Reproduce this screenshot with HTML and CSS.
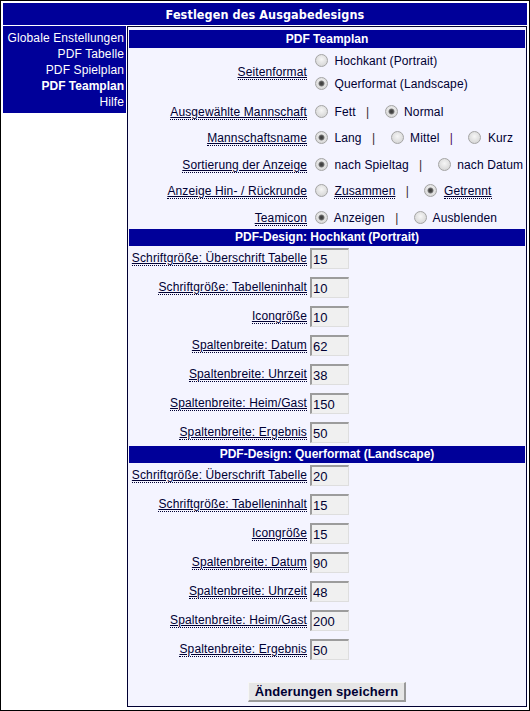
FILE: index.html
```html
<!DOCTYPE html>
<html lang="de">
<head>
<meta charset="utf-8">
<title>Festlegen des Ausgabedesigns</title>
<link rel="stylesheet" href="styles.css">
</head>
<body>
<div class="page">
  <div class="title">Festlegen des Ausgabedesigns</div>
  <div class="main">
    <nav class="side">
      <a href="#">Globale Enstellungen</a>
      <a href="#">PDF Tabelle</a>
      <a href="#">PDF Spielplan</a>
      <a href="#" class="active">PDF Teamplan</a>
      <a href="#">Hilfe</a>
    </nav>
    <form class="panel">
      <div class="band first">PDF Teamplan</div>
      <div class="grid radios">
        <div class="lbl r1"><span class="tip">Seitenformat</span></div>
        <div class="val r1">
          <div class="line"><input type="radio" name="sf"> Hochkant (Portrait)</div>
          <div class="line"><input type="radio" name="sf" checked> Querformat (Landscape)</div>
        </div>

        <div class="lbl"><span class="tip">Ausgewählte Mannschaft</span></div>
        <div class="val"><div class="line"><input type="radio" name="am"> Fett &nbsp; <span class="sep">|</span> &nbsp; <input type="radio" name="am" checked> Normal</div></div>

        <div class="lbl"><span class="tip">Mannschaftsname</span></div>
        <div class="val"><div class="line"><input type="radio" name="mn" checked> Lang &nbsp; <span class="sep">|</span> &nbsp; <input type="radio" name="mn"> Mittel &nbsp; <span class="sep alt">|</span> &nbsp; <input type="radio" name="mn"> Kurz</div></div>

        <div class="lbl"><span class="tip">Sortierung der Anzeige</span></div>
        <div class="val"><div class="line"><input type="radio" name="so" checked> nach Spieltag &nbsp; <span class="sep">|</span> &nbsp; <input type="radio" name="so"> nach Datum</div></div>

        <div class="lbl"><span class="tip">Anzeige Hin- / Rückrunde</span></div>
        <div class="val"><div class="line"><input type="radio" name="hr"> <span class="tip">Zusammen</span> &nbsp; <span class="sep">|</span> &nbsp; <input type="radio" name="hr" checked> <span class="tip">Getrennt</span></div></div>

        <div class="lbl"><span class="tip">Teamicon</span></div>
        <div class="val"><div class="line"><input type="radio" name="ti" checked> Anzeigen &nbsp; <span class="sep">|</span> &nbsp; <input type="radio" name="ti"> Ausblenden</div></div>
      </div>

      <div class="band">PDF-Design: Hochkant (Portrait)</div>
      <div class="grid inputs">
        <div class="lbl"><span class="tip">Schriftgröße: Überschrift Tabelle</span></div>
        <div class="val"><input type="text" value="15"></div>
        <div class="lbl"><span class="tip">Schriftgröße: Tabelleninhalt</span></div>
        <div class="val"><input type="text" value="10"></div>
        <div class="lbl"><span class="tip">Icongröße</span></div>
        <div class="val"><input type="text" value="10"></div>
        <div class="lbl"><span class="tip">Spaltenbreite: Datum</span></div>
        <div class="val"><input type="text" value="62"></div>
        <div class="lbl"><span class="tip">Spaltenbreite: Uhrzeit</span></div>
        <div class="val"><input type="text" value="38"></div>
        <div class="lbl"><span class="tip">Spaltenbreite: Heim/Gast</span></div>
        <div class="val"><input type="text" value="150"></div>
        <div class="lbl"><span class="tip">Spaltenbreite: Ergebnis</span></div>
        <div class="val"><input type="text" value="50"></div>
      </div>

      <div class="band">PDF-Design: Querformat (Landscape)</div>
      <div class="grid inputs">
        <div class="lbl"><span class="tip">Schriftgröße: Überschrift Tabelle</span></div>
        <div class="val"><input type="text" value="20"></div>
        <div class="lbl"><span class="tip">Schriftgröße: Tabelleninhalt</span></div>
        <div class="val"><input type="text" value="15"></div>
        <div class="lbl"><span class="tip">Icongröße</span></div>
        <div class="val"><input type="text" value="15"></div>
        <div class="lbl"><span class="tip">Spaltenbreite: Datum</span></div>
        <div class="val"><input type="text" value="90"></div>
        <div class="lbl"><span class="tip">Spaltenbreite: Uhrzeit</span></div>
        <div class="val"><input type="text" value="48"></div>
        <div class="lbl"><span class="tip">Spaltenbreite: Heim/Gast</span></div>
        <div class="val"><input type="text" value="200"></div>
        <div class="lbl"><span class="tip">Spaltenbreite: Ergebnis</span></div>
        <div class="val"><input type="text" value="50"></div>
      </div>

      <div class="actions"><button type="button">Änderungen speichern</button></div>
    </form>
  </div>
</div>
</body>
</html>
```
FILE: styles.css
```css
html, body {
  margin: 0;
  padding: 0;
  background: #ffffff;
}

body {
  font-family: "Liberation Sans", Arial, sans-serif;
  font-size: 12px;
  letter-spacing: 0.12px;
  color: #000033;
}

.page {
  width: 530px;
  height: 711px;
  box-sizing: border-box;
  border: 1px solid #000000;
  padding: 2px 2px 0 2px;
  display: flex;
  flex-direction: column;
  gap: 1px;
}

.title {
  height: 22px;
  flex: none;
  background: #000099;
  color: #ffffff;
  font-family: "DejaVu Sans Condensed", "DejaVu Sans", sans-serif;
  font-stretch: condensed;
  font-weight: bold;
  font-size: 12.5px;
  letter-spacing: 0.1px;
  display: flex;
  align-items: center;
  justify-content: center;
}

.main {
  display: flex;
  align-items: flex-start;
  gap: 1px;
}

.side {
  width: 123px;
  flex: none;
  box-sizing: border-box;
  background: #000099;
  padding: 4px 2px 3px 0;
  display: flex;
  flex-direction: column;
  align-items: flex-end;
  line-height: 16px;
}

.side a {
  color: #ffffff;
  text-decoration: none;
  white-space: nowrap;
}

.side a.active {
  font-weight: bold;
  letter-spacing: 0;
}

.panel {
  width: 400px;
  height: 681px;
  flex: none;
  box-sizing: border-box;
  margin: 0;
  border: 1px solid #000033;
  background: #f4f4ff;
  padding: 3px 1px 0 1px;
}

.band {
  height: 17px;
  line-height: 17px;
  background: #000099;
  color: #ffffff;
  font-weight: bold;
  letter-spacing: 0;
  text-align: center;
}

.band.first {
  height: 18px;
  line-height: 18px;
}

.grid {
  display: grid;
  grid-template-columns: 180px 1fr;
  column-gap: 1px;
}

.radios {
  grid-template-rows: 48px 25px 24px 25px 24px 25px;
  row-gap: 2px;
}

.inputs {
  grid-auto-rows: 21px;
  row-gap: 8px;
  padding: 2px 0 3px 0;
}

.lbl {
  display: flex;
  align-items: center;
  justify-content: flex-end;
  padding-right: 2px;
  white-space: nowrap;
}

.radios .lbl {
  padding-top: 3px;
}

.radios .lbl.r1 {
  padding-top: 1px;
}

.tip {
  text-decoration: underline;
  text-underline-offset: 1px;
  border-bottom: 1px dotted #000033;
}

.val {
  white-space: nowrap;
}

.radios .val {
  display: flex;
  flex-direction: column;
  justify-content: center;
  padding-top: 3px;
}

.radios .val.r1 {
  justify-content: flex-start;
  padding-top: 2px;
}

.line {
  height: 23px;
  line-height: 23px;
}

.sep {
  color: #3a2a30;
}

.sep.alt {
  color: #4a0a5a;
}

input[type="radio"] {
  appearance: none;
  -webkit-appearance: none;
  width: 13px;
  height: 13px;
  box-sizing: border-box;
  margin: 0 3px 0 5px;
  border: 1px solid #a4a4a4;
  border-radius: 50%;
  background: radial-gradient(circle at 50% 40%, #f6f6f6 0, #e4e4e4 45%, #cfcfcf 100%);
  vertical-align: middle;
  position: relative;
  top: -1px;
}

input[type="radio"]:checked {
  background:
    radial-gradient(circle, #3c3c3c 0, #4a4a4a 1.6px, #7a7a7a 2.6px, rgba(150,150,150,0) 3.4px),
    radial-gradient(circle at 50% 40%, #f6f6f6 0, #e4e4e4 45%, #cfcfcf 100%);
}

.inputs .val {
  display: flex;
  align-items: center;
}

input[type="text"] {
  width: 39px;
  height: 21px;
  box-sizing: border-box;
  margin: 0;
  padding: 0 1px;
  border-style: solid;
  border-width: 2px 1px 1px 2px;
  border-color: #9c9c9c #dedede #dedede #9c9c9c;
  background: #f0f0f0;
  font-family: "Liberation Sans", Arial, sans-serif;
  font-size: 13px;
  color: #000033;
  outline: none;
}

.actions {
  display: flex;
  justify-content: center;
  padding-top: 19px;
}

button {
  width: 158px;
  height: 20px;
  box-sizing: border-box;
  margin: 0;
  padding: 0;
  border-style: solid;
  border-width: 1px 2px 2px 1px;
  border-color: #f6f6f6 #9a9a9a #9a9a9a #f6f6f6;
  background: #e6e6e6;
  font-family: "Liberation Sans", Arial, sans-serif;
  font-weight: bold;
  font-size: 13px;
  letter-spacing: 0.1px;
  color: #000033;
  line-height: 16px;
}
```
